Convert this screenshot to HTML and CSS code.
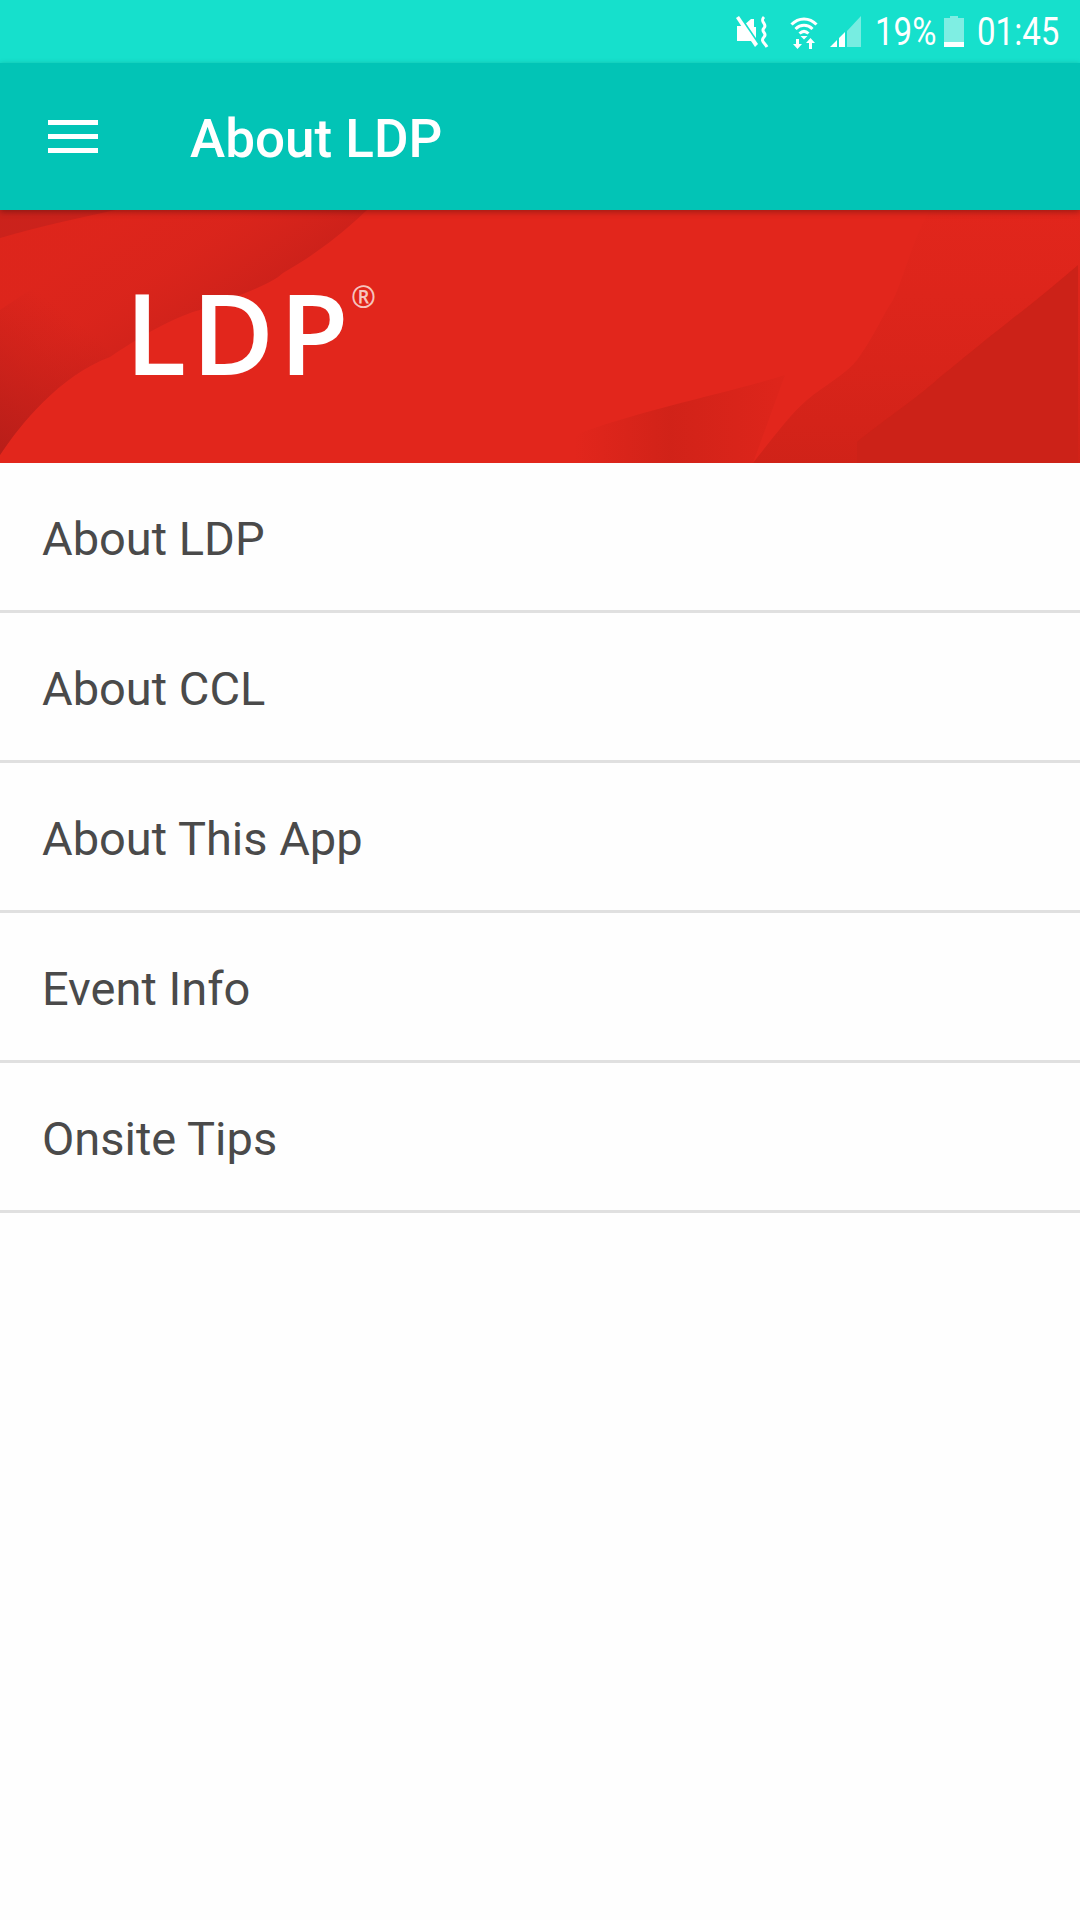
FILE: index.html
```html
<!DOCTYPE html>
<html lang="en">

<head>
    <meta charset="UTF-8">
    <title>About LDP</title>
    <link rel="stylesheet" href="styles.css">
</head>

<body>
    <div class="status">
        <svg class="ic-mute" viewBox="0 0 34 34" width="34" height="34">
            <path d="M1 11h6l8-7h3v8l2 0v17L15 26H1z" fill="#fff"/>
            <path d="M0 1l5 0 19 28-3 3z" fill="#16e0cc"/>
            <path d="M0 3l3-2 19 28-3 3z" fill="#fff"/>
            <path d="M28 2c-5 5 4 7 0 11-4 4 4 5 0 9-4 4 1 6 3 10" fill="none" stroke="#fff" stroke-width="3"/>
        </svg>
        <svg class="ic-wifi" viewBox="0 0 28 34" width="28" height="34">
            <path d="M1.500 9.500c7-7.500 18-7.500 25 0M5.500 14c5-5 12-5 17 0M9.500 18.500c3-2.800 6-2.800 9 0" fill="none" stroke="#fff" stroke-width="3"/>
            <path d="M10.500 21h7l-3.500 3.500z" fill="#fff"/>
            <path d="M6 24h3v5h3l-4.500 5-4.500-5h3z M19 34h3v-6h3l-4.500-5-4.500 5h3z" fill="#fff"/>
        </svg>
        <svg class="ic-signal" viewBox="0 0 32 33" width="32" height="33">
            <path d="M18 16L32 1v31H18z" fill="#fff" fill-opacity=".42"/>
            <path d="M1 32l7-7v7zM10 32V23l6-6v15z" fill="#fff"/>
        </svg>
        <span class="st-text st-pct">19%</span>
        <svg class="ic-batt" viewBox="0 0 20 31" width="20" height="31">
            <path d="M6 0h8v2h6v29H0V2h6z" fill="#fff" fill-opacity=".45"/>
            <path d="M0 26h20v5H0z" fill="#fff"/>
        </svg>
        <span class="st-text st-time">01:45</span>
    </div>

    <header class="appbar">
        <div class="menu-btn">
            <span></span>
            <span></span>
            <span></span>
        </div>
        <h1 class="appbar-title">About LDP</h1>
    </header>

    <div class="hero">
        <svg class="hero-bg" viewBox="0 0 1080 253" width="1080" height="253">
            <defs>
                <linearGradient id="edgeLeft" gradientUnits="userSpaceOnUse" x1="215" y1="110" x2="140" y2="0">
                    <stop offset="0" stop-color="#cb211a" stop-opacity=".9"/>
                    <stop offset=".55" stop-color="#d2231b" stop-opacity=".5"/>
                    <stop offset="1" stop-color="#d2231b" stop-opacity=".3"/>
                </linearGradient>
                <linearGradient id="cornerLeft" gradientUnits="userSpaceOnUse" x1="0" y1="240" x2="90" y2="120">
                    <stop offset="0" stop-color="#b91e19"/>
                    <stop offset="1" stop-color="#c4201a" stop-opacity="0"/>
                </linearGradient>
                <linearGradient id="riseMid" x1="0" y1="1" x2="0" y2="0">
                    <stop offset="0" stop-color="#cf2218" stop-opacity=".95"/>
                    <stop offset="1" stop-color="#d8241a" stop-opacity=".1"/>
                </linearGradient>
                <linearGradient id="fadeSide" x1="0" y1="0" x2="1" y2="0">
                    <stop offset="0" stop-color="#cf2218" stop-opacity="0"/>
                    <stop offset=".45" stop-color="#cf2218" stop-opacity=".9"/>
                    <stop offset="1" stop-color="#cf2218" stop-opacity=".2"/>
                </linearGradient>
            </defs>
            <path d="M0 28C40 16 80 8 115 0H0z" fill="#c8221c"/>
            <path d="M0 245C20 215 60 165 110 147C150 120 180 105 200 100C240 85 270 75 283 63C305 50 330 35 367 0H0z" fill="url(#edgeLeft)"/>
            <path d="M0 245C20 215 60 165 110 147L60 60L0 100z" fill="url(#cornerLeft)"/>
            <path d="M753 253C775 225 790 205 807 190C825 175 845 165 857 150C875 125 880 110 893 90C905 65 912 30 930 0H1080V253z" fill="url(#riseMid)"/>
            <path d="M575 225C640 200 720 185 785 165L753 253H575z" fill="url(#fadeSide)"/>
            <path d="M857 232C890 205 915 190 940 167C965 147 985 130 1007 113C1030 95 1055 75 1078 55V253H857z" fill="#cc2218"/>
        </svg>
        <div class="logo">LDP<span class="logo-reg">®</span></div>
    </div>

    <ul class="list">
        <li class="list-row">About LDP</li>
        <li class="list-row">About CCL</li>
        <li class="list-row">About This App</li>
        <li class="list-row">Event Info</li>
        <li class="list-row">Onsite Tips</li>
    </ul>
</body>

</html>
```

FILE: styles.css
```css
* {
    margin: 0;
    padding: 0;
    box-sizing: border-box;
}

body {
    width: 1080px;
    height: 1920px;
    background: #fefefe;
    font-family: Roboto, "Liberation Sans", sans-serif;
    overflow: hidden;
}

/* status bar */
.status {
    display: flex;
    align-items: center;
    justify-content: flex-end;
    height: 63px;
    padding-right: 20px;
    background: #16e0cc;
    color: #fff;
}

.st-text {
    font-size: 38px;
    white-space: nowrap;
    transform: scaleX(.87);
    transform-origin: left center;
}

.st-pct {
    width: 60px;
    margin-left: 14px;
}

.st-time {
    width: 83px;
    margin-left: 13px;
}

.ic-wifi {
    margin-left: 20px;
}

.ic-signal {
    margin-left: 11px;
}

.ic-batt {
    margin-left: 9px;
}

/* app bar */
.appbar {
    position: relative;
    z-index: 1;
    display: flex;
    align-items: center;
    gap: 92px;
    height: 147px;
    padding-left: 48px;
    background: #02c4b6;
    box-shadow: 0 2px 6px rgba(0, 0, 0, .3);
}

.menu-btn {
    display: flex;
    flex-direction: column;
    gap: 9px;
    width: 50px;
}

.menu-btn span {
    display: block;
    height: 5px;
    background: #fff;
}

.appbar-title {
    padding-top: 4px;
    font-size: 53px;
    font-weight: 500;
    color: #fff;
}

/* red banner */
.hero {
    position: relative;
    height: 253px;
    padding: 65px 0 0 125px;
    background: #e2261c;
    overflow: hidden;
}

.hero-bg {
    position: absolute;
    left: 0;
    top: 0;
}

.logo {
    position: relative;
    font-family: "Open Sans", "Liberation Sans", sans-serif;
    font-size: 113px;
    font-weight: 600;
    letter-spacing: 5px;
    line-height: 1;
    color: #fff;
    white-space: nowrap;
}

.logo-reg {
    position: absolute;
    left: 226px;
    top: 7px;
    font-size: 30px;
    font-weight: 600;
    letter-spacing: 0;
    line-height: 1;
    color: #f6c4bf;
}

/* menu list */
.list {
    list-style: none;
}

.list-row {
    display: flex;
    align-items: center;
    height: 150px;
    padding: 3px 0 0 42px;
    border-bottom: 3px solid #e0e0e0;
    font-size: 47px;
    color: #4a4a4a;
}
```
